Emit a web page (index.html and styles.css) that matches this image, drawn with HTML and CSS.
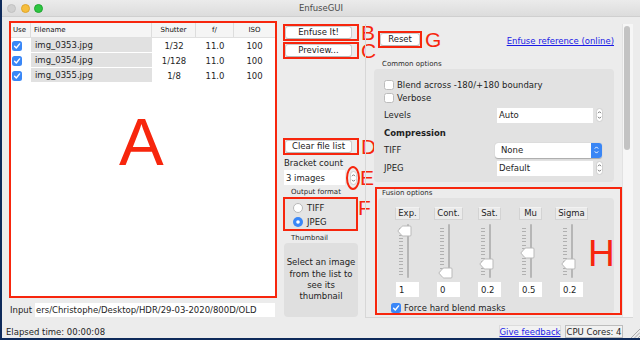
FILE: index.html
```html
<!doctype html>
<html lang="en">
    <head>
        <meta charset="UTF-8" />
        <title>EnfuseGUI</title>
        <link rel="stylesheet" href="styles.css">
    </head>
    <body>
        <div class="window">
            <div class="titlebar">
                <div class="lights">
                    <span class="light close"></span>
                    <span class="light min"></span>
                    <span class="light max"></span>
                </div>
                <div class="title">EnfuseGUI</div>
                <div></div>
            </div>

            <div class="main">
                <!-- file list -->
                <div class="left-col">
                    <div class="mark files">
                        <div class="grid head">
                            <div class="c-use">Use</div>
                            <div class="c-name">Filename</div>
                            <div class="c-num">Shutter</div>
                            <div class="c-num">f/</div>
                            <div class="c-num last">ISO</div>
                        </div>
                        <div class="grid row">
                            <div class="c-use"><svg class="cb" width="10" height="10" viewBox="0 0 10 10"><rect width="10" height="10" rx="2.5" fill="#3a87f7"/><path d="M2.6 5.2 L4.3 7 L7.6 2.9" fill="none" stroke="#fff" stroke-width="1.4" stroke-linecap="round" stroke-linejoin="round"/></svg></div>
                            <div class="c-name">img_0353.jpg</div>
                            <div class="c-num">1/32</div>
                            <div class="c-num">11.0</div>
                            <div class="c-num">100</div>
                        </div>
                        <div class="grid row">
                            <div class="c-use"><svg class="cb" width="10" height="10" viewBox="0 0 10 10"><rect width="10" height="10" rx="2.5" fill="#3a87f7"/><path d="M2.6 5.2 L4.3 7 L7.6 2.9" fill="none" stroke="#fff" stroke-width="1.4" stroke-linecap="round" stroke-linejoin="round"/></svg></div>
                            <div class="c-name">img_0354.jpg</div>
                            <div class="c-num">1/128</div>
                            <div class="c-num">11.0</div>
                            <div class="c-num">100</div>
                        </div>
                        <div class="grid row">
                            <div class="c-use"><svg class="cb" width="10" height="10" viewBox="0 0 10 10"><rect width="10" height="10" rx="2.5" fill="#3a87f7"/><path d="M2.6 5.2 L4.3 7 L7.6 2.9" fill="none" stroke="#fff" stroke-width="1.4" stroke-linecap="round" stroke-linejoin="round"/></svg></div>
                            <div class="c-name">img_0355.jpg</div>
                            <div class="c-num">1/8</div>
                            <div class="c-num">11.0</div>
                            <div class="c-num">100</div>
                        </div>
                        <span class="big-a">A</span>
                    </div>
                    <div class="input-row">
                        <span class="input-label">Input</span>
                        <div class="field path">ers/Christophe/Desktop/HDR/29-03-2020/800D/OLD</div>
                    </div>
                </div>

                <!-- actions -->
                <div class="mid-col">
                    <div class="mark-row">
                        <div class="mark btn-mark"><button class="btn">Enfuse It!</button></div>
                        <span class="letter">B</span>
                    </div>
                    <div class="mark-row row-c">
                        <div class="mark btn-mark"><button class="btn">Preview...</button></div>
                        <span class="letter">C</span>
                    </div>
                    <div class="mark-row row-d">
                        <div class="mark btn-mark"><button class="btn">Clear file list</button></div>
                        <span class="letter">D</span>
                    </div>
                    <div class="mid-label">Bracket count</div>
                    <div class="spin-row">
                        <div class="field count">3 images</div>
                        <span class="ring"><svg width="7" height="14" viewBox="0 0 7 14"><rect x="0.5" y="0.5" width="6" height="13" rx="3" fill="#fff" stroke="#cfcfcf"/><path d="M2 5.2 L3.5 3.7 L5 5.2 M2 8.8 L3.5 10.3 L5 8.8" fill="none" stroke="#666" stroke-width="0.9"/></svg></span>
                        <span class="letter">E</span>
                    </div>
                    <div class="small-label">Output format</div>
                    <div class="mark-row row-f">
                        <div class="mark format">
                            <div class="radio-row">
                                <svg width="10" height="10" viewBox="0 0 10 10"><circle cx="5" cy="5" r="4.5" fill="#fff" stroke="#b8b8b8"/></svg>
                                <span>TIFF</span>
                            </div>
                            <div class="radio-row">
                                <svg width="10" height="10" viewBox="0 0 10 10"><circle cx="5" cy="5" r="5" fill="#3a87f7"/><circle cx="5" cy="5" r="1.8" fill="#fff"/></svg>
                                <span>JPEG</span>
                            </div>
                        </div>
                        <span class="letter">F</span>
                    </div>
                    <div class="small-label thumb-label">Thumbnail</div>
                    <div class="thumbnail">Select an image<br/>from the list to<br/>see its<br/>thumbnail</div>
                </div>

                <!-- options -->
                <div class="options">
                    <div class="options-content">
                        <div class="top-row">
                            <div class="mark reset-mark"><button class="btn reset">Reset</button></div>
                            <span class="letter">G</span>
                            <a class="link ref-link" href="#">Enfuse reference (online)</a>
                        </div>

                        <div class="small-label group-label">Common options</div>
                        <div class="group common">
                            <div class="check-row">
                                <svg width="10" height="10" viewBox="0 0 10 10"><rect x="0.5" y="0.5" width="9" height="9" rx="2" fill="#fff" stroke="#bcbcbc"/></svg>
                                <span>Blend across -180/+180 boundary</span>
                            </div>
                            <div class="check-row">
                                <svg width="10" height="10" viewBox="0 0 10 10"><rect x="0.5" y="0.5" width="9" height="9" rx="2" fill="#fff" stroke="#bcbcbc"/></svg>
                                <span>Verbose</span>
                            </div>
                            <div class="opt-row levels">
                                <span class="opt-label">Levels</span>
                                <div class="field opt-field">Auto</div>
                                <svg class="stepper" width="7" height="14" viewBox="0 0 7 14"><rect x="0.5" y="0.5" width="6" height="13" rx="3" fill="#fff" stroke="#cfcfcf"/><path d="M2 5.2 L3.5 3.7 L5 5.2 M2 8.8 L3.5 10.3 L5 8.8" fill="none" stroke="#666" stroke-width="0.9"/></svg>
                            </div>
                            <div class="section-title">Compression</div>
                            <div class="opt-row tiff">
                                <span class="opt-label">TIFF</span>
                                <div class="select">
                                    <span class="select-text">None</span>
                                    <span class="select-arrow"><svg width="11" height="14" viewBox="0 0 11 14"><path d="M3.8 5.6 L5.5 3.9 L7.2 5.6 M3.8 8.4 L5.5 10.1 L7.2 8.4" fill="none" stroke="#fff" stroke-width="1"/></svg></span>
                                </div>
                            </div>
                            <div class="opt-row jpeg">
                                <span class="opt-label">JPEG</span>
                                <div class="field opt-field">Default</div>
                                <svg class="stepper" width="7" height="14" viewBox="0 0 7 14"><rect x="0.5" y="0.5" width="6" height="13" rx="3" fill="#fff" stroke="#cfcfcf"/><path d="M2 5.2 L3.5 3.7 L5 5.2 M2 8.8 L3.5 10.3 L5 8.8" fill="none" stroke="#666" stroke-width="0.9"/></svg>
                            </div>
                        </div>

                        <div class="mark fusion">
                            <div class="small-label fusion-label">Fusion options</div>
                            <div class="group fusion-panel">
                                <div class="sliders">
                                    <div class="slider-col">
                                        <span class="mini-btn">Exp.</span>
                                        <div class="slider">
                                            <span class="ticks"></span><span class="track"></span>
                                            <svg class="knob" style="top: 2px" width="15" height="12" viewBox="0 0 15 12"><path d="M0.8 6 L4.6 1.7 Q5.2 1 6.2 1 H13 Q14 1 14 2 V10 Q14 11 13 11 H6.2 Q5.2 11 4.6 10.3 Z" fill="#fff" stroke="#b9b9b9"/></svg>
                                        </div>
                                        <div class="field val">1</div>
                                    </div>
                                    <div class="slider-col">
                                        <span class="mini-btn">Cont.</span>
                                        <div class="slider">
                                            <span class="ticks"></span><span class="track"></span>
                                            <svg class="knob" style="top: 44px" width="15" height="12" viewBox="0 0 15 12"><path d="M0.8 6 L4.6 1.7 Q5.2 1 6.2 1 H13 Q14 1 14 2 V10 Q14 11 13 11 H6.2 Q5.2 11 4.6 10.3 Z" fill="#fff" stroke="#b9b9b9"/></svg>
                                        </div>
                                        <div class="field val">0</div>
                                    </div>
                                    <div class="slider-col">
                                        <span class="mini-btn">Sat.</span>
                                        <div class="slider">
                                            <span class="ticks"></span><span class="track"></span>
                                            <svg class="knob" style="top: 35px" width="15" height="12" viewBox="0 0 15 12"><path d="M0.8 6 L4.6 1.7 Q5.2 1 6.2 1 H13 Q14 1 14 2 V10 Q14 11 13 11 H6.2 Q5.2 11 4.6 10.3 Z" fill="#fff" stroke="#b9b9b9"/></svg>
                                        </div>
                                        <div class="field val">0.2</div>
                                    </div>
                                    <div class="slider-col">
                                        <span class="mini-btn">Mu</span>
                                        <div class="slider">
                                            <span class="ticks"></span><span class="track"></span>
                                            <svg class="knob" style="top: 24px" width="15" height="12" viewBox="0 0 15 12"><path d="M0.8 6 L4.6 1.7 Q5.2 1 6.2 1 H13 Q14 1 14 2 V10 Q14 11 13 11 H6.2 Q5.2 11 4.6 10.3 Z" fill="#fff" stroke="#b9b9b9"/></svg>
                                        </div>
                                        <div class="field val">0.5</div>
                                    </div>
                                    <div class="slider-col">
                                        <span class="mini-btn">Sigma</span>
                                        <div class="slider">
                                            <span class="ticks"></span><span class="track"></span>
                                            <svg class="knob" style="top: 35px" width="15" height="12" viewBox="0 0 15 12"><path d="M0.8 6 L4.6 1.7 Q5.2 1 6.2 1 H13 Q14 1 14 2 V10 Q14 11 13 11 H6.2 Q5.2 11 4.6 10.3 Z" fill="#fff" stroke="#b9b9b9"/></svg>
                                        </div>
                                        <div class="field val">0.2</div>
                                    </div>
                                </div>
                                <div class="check-row force">
                                    <svg width="10" height="10" viewBox="0 0 10 10"><rect width="10" height="10" rx="2.5" fill="#3a87f7"/><path d="M2.6 5.2 L4.3 7 L7.6 2.9" fill="none" stroke="#fff" stroke-width="1.4" stroke-linecap="round" stroke-linejoin="round"/></svg>
                                    <span>Force hard blend masks</span>
                                </div>
                            </div>
                            <span class="big-h">H</span>
                        </div>
                    </div>
                    <div class="scrollbar"><div class="scroll-thumb"></div></div>
                </div>
            </div>

            <div class="statusbar">
                <span class="elapsed">Elapsed time: 00:00:08</span>
                <span class="status-box feedback"><a class="link" href="#">Give feedback</a></span>
                <span class="status-box cores">CPU Cores: 4</span>
                <svg class="grip" width="10" height="10" viewBox="0 0 10 10"><path d="M10 1 L1 10 M10 4.5 L4.5 10 M10 8 L8 10" stroke="#9d9d9d" stroke-width="0.8"/></svg>
            </div>
        </div>
    </body>
</html>
```

FILE: styles.css
```css
body {
    margin: 0;
    background: #0e2a5a;
    font-family: "DejaVu Sans", sans-serif;
    font-size: 8.5px;
    color: #1e1e1e;
}
.window {
    margin-left: 2px;
    width: 638px;
    height: 338px;
    background: #ececec;
    display: flex;
    flex-direction: column;
    overflow: hidden;
}

/* title bar */
.titlebar {
    height: 17px;
    flex-shrink: 0;
    display: grid;
    grid-template-columns: 1fr auto 1fr;
    align-items: center;
    background: linear-gradient(#ebebeb, #dcdcdc);
    border-bottom: 1px solid #cfcfcf;
    box-sizing: border-box;
}
.lights {
    display: flex;
    gap: 4.5px;
    padding-left: 5px;
}
.light {
    width: 9px;
    height: 9px;
    border-radius: 50%;
    box-sizing: border-box;
}
.close { background: #d0d0d0; border: 1px solid #c2c2c2; }
.min { background: #f6be3b; border: 1px solid #dea42c; }
.max { background: #2dc641; border: 1px solid #20a632; }
.title {
    color: #4a4a4a;
    font-size: 8.5px;
}

.main {
    display: flex;
    height: 304px;
    flex-shrink: 0;
}
.mark {
    border: 2px solid #f7260d;
    box-sizing: border-box;
}
.letter {
    font-family: "Liberation Sans", Arial, sans-serif;
    font-size: 21px;
    line-height: 17px;
    color: #f7260d;
    flex-shrink: 0;
    margin-left: 2px;
}
.field {
    background: #fff;
    box-sizing: border-box;
    white-space: nowrap;
    overflow: hidden;
    display: flex;
    align-items: center;
}
.link {
    color: #1b1be6;
    text-decoration: underline;
    white-space: nowrap;
}
.btn {
    width: 67px;
    height: 13px;
    padding: 0;
    background: #fff;
    border: 1px solid #cdcdcd;
    border-bottom-color: #b9b9b9;
    border-radius: 3px;
    box-sizing: border-box;
    font: inherit;
    line-height: 11px;
    color: #1a1a1a;
}
.small-label {
    font-size: 7px;
    height: 10px;
    line-height: 10px;
    color: #2a2a2a;
}

/* left column */
.left-col {
    margin-left: 7px;
    width: 268px;
    padding-top: 4px;
    display: flex;
    flex-direction: column;
}
.files {
    height: 277px;
    background: #fff;
    position: relative;
}
.grid {
    display: grid;
    grid-template-columns: 20px 121px 44px 38px 41px;
    height: 15px;
}
.grid > div {
    display: flex;
    align-items: center;
}
.head {
    background: #f5f5f5;
    border-bottom: 1px solid #e0e0e0;
    box-sizing: border-box;
    font-size: 7px;
    color: #111;
}
.head > div {
    border-right: 1px solid #dddddd;
}
.head > div.last {
    border-right: none;
}
.c-use {
    padding-left: 1px;
}
.head .c-use {
    padding-left: 2px;
}
.c-name {
    padding-left: 3px;
}
.row .c-name {
    padding-left: 4px;
    background: #e1e1e1;
    border-bottom: 1px solid #fff;
}
.c-num {
    justify-content: center;
}
.big-a {
    position: absolute;
    left: 108px;
    top: 85px;
    font-family: "Liberation Sans", Arial, sans-serif;
    font-size: 67px;
    line-height: 1;
    color: #f7260d;
}
.input-row {
    display: flex;
    align-items: center;
    height: 14px;
    margin-top: 5px;
}
.input-label {
    width: 26px;
    padding-left: 1px;
    box-sizing: border-box;
}
.path {
    flex: 1;
    height: 14px;
    padding-left: 1px;
    margin-right: 2px;
}

/* middle column */
.mid-col {
    margin-left: 6px;
    width: 76px;
    flex-shrink: 0;
    padding-top: 7px;
    display: flex;
    flex-direction: column;
}
.mark-row {
    display: flex;
    align-items: center;
    height: 17px;
}
.btn-mark {
    width: 76px;
    height: 17px;
    flex-shrink: 0;
    display: flex;
    align-items: center;
}
.row-c {
    margin-top: 1px;
}
.row-d {
    margin-top: 79px;
}
.mid-label {
    margin-top: 2px;
    height: 12px;
    line-height: 12px;
    padding-left: 1px;
}
.spin-row {
    display: flex;
    align-items: center;
    height: 15px;
    margin-top: 1px;
}
.count {
    width: 61px;
    height: 15px;
    margin-left: 1px;
    padding-left: 2px;
    flex-shrink: 0;
}
.ring {
    width: 14px;
    height: 24px;
    margin-left: 1px;
    border: 2px solid #f7260d;
    border-radius: 50%;
    box-sizing: border-box;
    flex-shrink: 0;
    display: flex;
    align-items: center;
    justify-content: center;
}
.spin-row .letter {
    margin-left: 0;
}
.small-label {
    padding-left: 8px;
}
.mid-col .small-label {
    margin-top: 2px;
}
.row-f {
    height: 34px;
}
.format {
    width: 75px;
    height: 34px;
    flex-shrink: 0;
    background: #e4e4e4;
    padding-top: 2px;
}
.row-f .letter {
    margin-left: 0;
    align-self: flex-start;
    padding-top: 2px;
}
.radio-row {
    display: flex;
    align-items: center;
    height: 14px;
    padding-left: 8px;
    gap: 4px;
}
.thumb-label {
    margin-top: 2px;
}
.thumbnail {
    margin-left: 1px;
    width: 74px;
    height: 74px;
    background: #dfdfdf;
    border-radius: 4px;
    display: flex;
    align-items: center;
    justify-content: center;
    text-align: center;
    line-height: 11.3px;
}

/* options pane */
.options {
    margin-left: 6px;
    margin-top: 7px;
    width: 268px;
    height: 294px;
    border-left: 1px solid #d7d7d7;
    border-bottom: 1px solid #d7d7d7;
    box-sizing: border-box;
    display: flex;
}
.options-content {
    flex: 1;
    padding-top: 7px;
}
.scrollbar {
    width: 11px;
    background: #f6f6f6;
    border-left: 1px solid #e2e2e2;
    box-sizing: border-box;
    padding: 2px 0 0 1px;
}
.scroll-thumb {
    width: 6px;
    height: 124px;
    background: #c3c3c3;
    border-radius: 3px;
}
.top-row {
    display: flex;
    align-items: center;
    height: 17px;
    padding-left: 12px;
}
.reset-mark {
    width: 44px;
    height: 17px;
    display: flex;
    align-items: center;
}
.reset {
    width: 40px;
}
.top-row .letter {
    margin-left: 3px;
}
.ref-link {
    margin-left: auto;
    margin-right: 8px;
    padding-top: 3px;
}
.group-label {
    margin-top: 12px;
    height: 9px;
    line-height: 9px;
    padding-left: 16px;
}
.group {
    background: #e2e2e2;
    border-radius: 4px;
}
.common {
    margin: 0 8px;
    padding: 9px 0 6px 10px;
}
.check-row {
    display: flex;
    align-items: center;
    gap: 3px;
    height: 13px;
}
.opt-row {
    display: flex;
    align-items: center;
    height: 16px;
    margin-top: 2px;
}
.levels {
    margin-top: 3px;
}
.opt-label {
    width: 113px;
    flex-shrink: 0;
}
.opt-field {
    width: 96px;
    height: 15px;
    padding-left: 2px;
}
.stepper {
    margin-left: 3px;
}
.section-title {
    font-weight: bold;
    height: 14px;
    line-height: 14px;
    margin-top: 3px;
}
.select {
    margin-left: -2px;
    width: 107px;
    height: 15px;
    display: flex;
    background: #fff;
    border-radius: 3px;
    box-shadow: 0 0.5px 1px rgba(0, 0, 0, 0.25);
}
.select-text {
    flex: 1;
    padding-left: 6px;
    line-height: 15px;
}
.select-arrow {
    width: 11px;
    background: #3a86f5;
    border-radius: 0 3px 3px 0;
    display: flex;
    align-items: center;
}

/* fusion options */
.fusion {
    position: relative;
    margin: 5px 0 0 9px;
    width: 247px;
    height: 128px;
}
.fusion-label {
    height: 9px;
    line-height: 9px;
    padding-left: 5px;
}
.fusion-panel {
    margin: 0 6px 0 1px;
    height: 115px;
    padding: 9px 0 0 9px;
    box-sizing: border-box;
}
.sliders {
    display: flex;
}
.slider-col {
    width: 41px;
    display: flex;
    flex-direction: column;
    align-items: center;
}
.mini-btn {
    height: 13px;
    padding: 0 2px;
    min-width: 23px;
    box-sizing: border-box;
    text-align: center;
    background: #ebebeb;
    border: 1px solid #d3d3d3;
    border-top-color: #f2f2f2;
    line-height: 11px;
}
.slider {
    position: relative;
    width: 30px;
    height: 56px;
    margin-top: 3px;
}
.track {
    position: absolute;
    left: 14px;
    top: 1px;
    width: 2px;
    height: 54px;
    background: #b6b6b6;
    border-radius: 1px;
}
.ticks {
    position: absolute;
    left: 6px;
    top: 5px;
    width: 4px;
    height: 47px;
    background: repeating-linear-gradient(to bottom, #b0b0b0 0 1px, transparent 1px 3.3px);
}
.knob {
    position: absolute;
    left: 4px;
}
.val {
    width: 23px;
    height: 15px;
    margin-top: 3px;
    padding-left: 3px;
}
.force {
    margin-top: 5px;
    height: 11px;
    padding-left: 4px;
}
.big-h {
    position: absolute;
    left: 211px;
    top: 46px;
    font-family: "Liberation Sans", Arial, sans-serif;
    font-size: 37px;
    line-height: 1;
    color: #f7260d;
}

/* status bar */
.statusbar {
    height: 17px;
    flex-shrink: 0;
    display: flex;
    align-items: center;
    padding: 4px 0 0 4px;
    box-sizing: border-box;
}
.elapsed {
    flex: 1;
}
.status-box {
    height: 13px;
    box-sizing: border-box;
    display: flex;
    align-items: center;
    justify-content: center;
    white-space: nowrap;
    flex-shrink: 0;
}
.feedback {
    width: 62px;
    border: 1px solid #dcdcdc;
    background: #f2f2f2;
}
.cores {
    width: 58px;
    margin-left: 4px;
    border: 1px solid #bdbdbd;
    background: #f1f1f1;
}
.grip {
    margin-left: 7px;
    flex-shrink: 0;
    align-self: flex-end;
}
```
